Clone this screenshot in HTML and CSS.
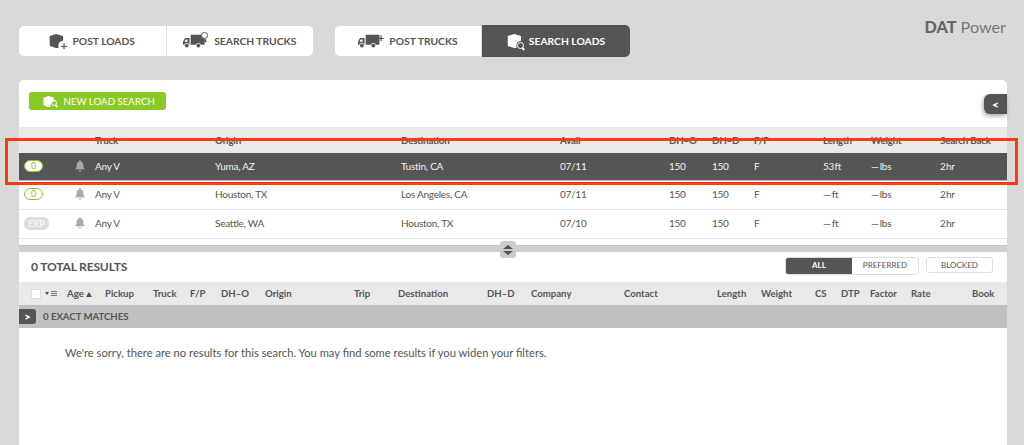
FILE: index.html
```html
<!DOCTYPE html>
<html lang="en">
<head>
<meta charset="utf-8">
<title>DAT Power</title>
<link rel="stylesheet" href="styles.css">
</head>
<body>
<svg class="defs" width="0" height="0" aria-hidden="true">
  <symbol id="box" viewBox="0 0 20 20"><path d="M10 0 20 3v6.500a7 7 0 0 0-6.500 7V20L10 20 1 17V3z"/></symbol>
  <symbol id="truck" viewBox="0 0 30 20"><path d="M10 2h18v13H10zM8.500 6v9H0v-4l2.500-5zM3.500 8 2 11h4V8z" fill-rule="evenodd"/><circle cx="5" cy="16" r="3" stroke="#fff" stroke-width="1"/><circle cx="20" cy="16" r="3" stroke="#fff" stroke-width="1"/></symbol>
  <symbol id="bell" viewBox="0 0 12 14"><path d="M6 0a1 1 0 0 1 1 1.200C9 1.800 10 3.500 10 6c0 2.500.8 3.800 2 5H0c1.200-1.200 2-2.500 2-5 0-2.500 1-4.200 3-4.800A1 1 0 0 1 6 0zM4.300 12h3.400a1.700 1.700 0 0 1-3.400 0z"/></symbol>
</svg>

<div class="page">
  <header class="topbar">
    <nav class="tabs">
      <a class="tab">
        <span class="ico ico-box"><svg class="i-box"><use href="#box"/></svg><span class="plus">+</span></span>POST LOADS
      </a>
      <a class="tab">
        <span class="ico ico-truck"><svg class="i-truck"><use href="#truck"/></svg><span class="lens lens-top"></span></span>SEARCH TRUCKS
      </a>
    </nav>
    <nav class="tabs tabs-second">
      <a class="tab">
        <span class="ico ico-truck"><svg class="i-truck"><use href="#truck"/></svg><span class="plus plus-top">+</span></span>POST TRUCKS
      </a>
      <a class="tab tab-active">
        <span class="ico ico-box"><svg class="i-box"><use href="#box"/></svg><span class="lens"></span></span>SEARCH LOADS
      </a>
    </nav>
    <div class="logo"><b>DAT</b> Power</div>
  </header>

  <section class="panel panel-top">
    <div class="toolbar">
      <button class="new-search"><span class="ico ico-small"><svg class="i-box-s"><use href="#box"/></svg><span class="lens lens-small"></span></span>NEW LOAD SEARCH</button>
    </div>
    <button class="collapse">&lt;</button>

    <div class="searches searches-head">
      <span></span><span></span><span>Truck</span><span>Origin</span><span>Destination</span><span>Avail</span><span>DH–O</span><span>DH–D</span><span>F/P</span><span>Length</span><span>Weight</span><span>Search Back</span>
    </div>
    <div class="searches row row-active">
      <span class="cell-badge"><span class="badge">0</span></span><svg class="bell"><use href="#bell"/></svg><span>Any V</span><span>Yuma, AZ</span><span>Tustin, CA</span><span>07/11</span><span>150</span><span>150</span><span>F</span><span>53&#8202;ft</span><span>—&#8201;lbs</span><span>2&#8202;hr</span>
    </div>
    <div class="searches row">
      <span class="cell-badge"><span class="badge">0</span></span><svg class="bell"><use href="#bell"/></svg><span>Any V</span><span>Houston, TX</span><span>Los Angeles, CA</span><span>07/11</span><span>150</span><span>150</span><span>F</span><span>—&#8201;ft</span><span>—&#8201;lbs</span><span>2&#8202;hr</span>
    </div>
    <div class="searches row">
      <span class="cell-badge"><span class="badge badge-exp">EXP</span></span><svg class="bell"><use href="#bell"/></svg><span>Any V</span><span>Seattle, WA</span><span>Houston, TX</span><span>07/10</span><span>150</span><span>150</span><span>F</span><span>—&#8201;ft</span><span>—&#8201;lbs</span><span>2&#8202;hr</span>
    </div>
  </section>

  <div class="divider"><span class="handle"><i class="up"></i><i class="down"></i></span></div>

  <section class="panel panel-results">
    <div class="results-title">
      <h2>0 TOTAL RESULTS</h2>
      <div class="filters">
        <div class="seg"><span class="seg-item seg-on">ALL</span><span class="seg-item">PREFERRED</span></div>
        <span class="seg seg-item seg-single">BLOCKED</span>
      </div>
    </div>
    <div class="results-head">
      <span class="select"><span class="check"></span><i class="caret"></i><i class="lines"></i></span>
      <span>Age <i class="sort"></i></span><span>Pickup</span><span>Truck</span><span>F/P</span><span>DH–O</span><span>Origin</span><span>Trip</span><span>Destination</span><span>DH–D</span><span>Company</span><span>Contact</span><span>Length</span><span>Weight</span><span>CS</span><span>DTP</span><span>Factor</span><span>Rate</span><span>Book</span>
    </div>
    <div class="matches"><button class="expand">&gt;</button>0 EXACT MATCHES</div>
    <p class="empty">We're sorry, there are no results for this search. You may find some results if you widen your filters.</p>
  </section>
</div>
<div class="callout"></div>
</body>
</html>
```
FILE: styles.css
```css
* { box-sizing: border-box; }
html, body { margin: 0; height: 445px; overflow: hidden; }
body { background: #d9d9d9; font-family: Lato, "Open Sans", sans-serif; color: #555; font-size: 10px; }
.defs { position: absolute; }
.page { padding: 26px 17px 0 19px; height: 445px; display: flex; flex-direction: column; }

.topbar { display: flex; align-items: flex-start; height: 30px; margin-bottom: 24px; }
.tabs { display: flex; width: 294px; height: 30px; background: #fff; border-radius: 5px; }
.tabs-second { width: 295px; margin-left: 22px; }
.tab { flex: 1; display: flex; align-items: center; justify-content: center; gap: 5px; font-weight: 700; font-size: 10.300px; color: #555; }
.tab + .tab { border-left: 1px solid #e2e2e2; }
.tab-active { background: #555; color: #fff; border: 0; border-radius: 0 5px 5px 0; height: 32px; margin-top: -1px; gap: 4px; }
.tabs-second .tab:first-child { flex: 0 0 146px; }
.ico { position: relative; display: inline-flex; align-items: center; height: 18px; color: #555; fill: currentColor; }
.ico-box { width: 18px; }
.ico-truck { width: 26px; }
.i-box { width: 14px; height: 14px; }
.i-truck { width: 23px; height: 16px; }
.i-box-s { width: 11px; height: 11px; fill: #fff; }
.tab-active .ico { color: #fff; fill: #fff; }
.plus { position: absolute; right: 0; bottom: 0; font-size: 12px; line-height: 9px; font-weight: 700; }
.plus-top { right: 0; top: 1px; bottom: auto; }
.lens { position: absolute; right: 1px; bottom: 1px; width: 7px; height: 7px; border: 1.500px solid #fff; border-radius: 50%; }
.lens::after { content: ""; position: absolute; right: -2px; bottom: -1px; width: 3px; height: 1.500px; background: #fff; transform: rotate(45deg); }
.lens-top { top: 0; right: 1px; bottom: auto; border-color: #555; background: #fff; }
.lens-top::after { background: #555; transform: rotate(90deg); right: 0; bottom: -3px; }
.lens-small { width: 6px; height: 6px; right: 0; bottom: 2px; }
.logo { margin-left: auto; margin-right: 1px; margin-top: -10px; font-size: 16.200px; line-height: 22px; color: #777; font-weight: 400; }
.logo b { font-weight: 900; color: #666; }

.panel { background: #fff; }
.panel-top { position: relative; height: 165px; border-radius: 5px 5px 0 0; }
.toolbar { height: 47px; padding: 12px 0 0 9.500px; }
.new-search { display: flex; align-items: center; width: 137px; height: 18px; padding: 0 0 0 14px; background: #8bc924; border: 0; border-radius: 3px; color: #fff; font: 400 9.700px Lato, sans-serif; gap: 7px; }
.ico-small { width: 14px; height: 14px; color: #fff; }
.collapse { position: absolute; top: 14px; right: 0; width: 23px; height: 20px; background: #555; color: #fff; border: 0; border-radius: 6px 0 0 6px; font: 900 12px Lato, sans-serif; padding: 0; box-shadow: -1px 2px 4px rgba(0,0,0,.35); }

.searches { display: grid; grid-template-columns: 51px 20px 120px 186px 159px 109px 43px 42px 69px 48px 69px 1fr; align-items: center; padding-left: 5px; letter-spacing: -.25px; }
.searches-head { height: 26px; background: #e9e9e9; font-weight: 700; color: #555; font-size: 9.800px; letter-spacing: -.2px; }
.row { height: 29px; padding-bottom: 2px; border-bottom: 1px solid #e4e4e4; }
.row-active { height: 28px; background: #555; color: #f2f2f2; border-bottom: 1px solid #bbb; }
.cell-badge { display: flex; align-items: center; }
.badge { display: inline-block; width: 19px; height: 12px; line-height: 10px; border: 1px solid #8bc924; border-radius: 6px; background: #fff; color: #8bc924; text-align: center; font-size: 9px; letter-spacing: 0; }
.badge-exp { width: 25px; height: 13px; line-height: 13px; border: 0; background: #ddd; color: #fff; }
.bell { width: 10px; height: 12px; fill: #aaa; }

.divider { position: relative; height: 7px; background: #d0d0d0; border-top: 1px solid #c4c4c4; }
.handle { position: absolute; left: 481px; top: -5px; width: 16px; height: 17px; background: #ccc; border-radius: 3px; display: flex; flex-direction: column; align-items: center; justify-content: center; gap: 2px; }
.up, .down { width: 0; height: 0; border: 5px solid transparent; }
.up { border-top: 0; border-bottom: 4px solid #555; }
.down { border-bottom: 0; border-top: 4px solid #555; }

.panel-results { flex: 1; }
.results-title { display: flex; align-items: center; justify-content: space-between; height: 30px; padding: 0 14px 2px 12px; }
h2 { margin: 0; font-size: 12.100px; font-weight: 700; color: #555; letter-spacing: -.2px; }
.filters { display: flex; gap: 7px; }
.seg { display: flex; border: 1px solid #ddd; border-radius: 3px; overflow: hidden; }
.seg-item { width: 66px; height: 16px; line-height: 15px; text-align: center; font-size: 8px; color: #555; }
.seg-single { width: 67px; display: block; }
.seg-on { background: #555; color: #fff; font-weight: 700; }

.results-head { display: grid; grid-template-columns: 36px 38px 48px 37px 31px 44px 89px 44px 89px 44px 93px 93px 44px 54px 26px 29px 41px 61px 1fr; align-items: center; height: 23px; background: #e9e9e9; padding-left: 12px; font-weight: 700; font-size: 9.600px; color: #555; }
.select { display: flex; align-items: center; }
.check { width: 10px; height: 10px; background: #fff; border: 1px solid #ddd; margin-right: 4px; }
.caret { width: 0; height: 0; border: 2px solid transparent; border-top: 3px solid #555; border-bottom: 0; margin-right: 2px; }
.lines { width: 6px; height: 5px; border-top: 1px solid #777; border-bottom: 1px solid #777; background: linear-gradient(#777,#777) center / 100% 1px no-repeat; }
.sort { display: inline-block; width: 0; height: 0; border: 3.500px solid transparent; border-bottom: 5px solid #555; border-top: 0; }
.matches { display: flex; align-items: center; height: 23px; background: #c1c1c1; font-size: 9.600px; font-weight: 700; color: #555; gap: 7px; }
.expand { width: 17px; height: 15px; background: #555; color: #fff; border: 0; border-radius: 0 3px 3px 0; font: 900 11px Lato, sans-serif; padding: 0; }
.empty { margin: 17px 0 0 46px; font-size: 11.200px; line-height: 16px; color: #555; }

.callout { position: absolute; left: 5px; top: 138px; width: 1013px; height: 47px; border: 3px solid #fb3a14; pointer-events: none; }
```
